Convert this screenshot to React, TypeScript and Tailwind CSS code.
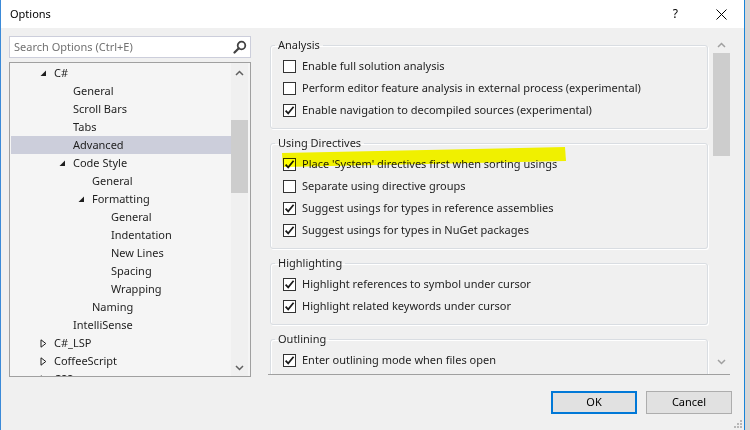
import React from "react";

const FONT = { fontFamily: '"Noto Sans", "Segoe UI", sans-serif' };

type Node = { label: string; level: 0 | 1 | 2 | 3; exp?: "open" | "closed"; sel?: boolean };

const tree: Node[] = [
  { label: "C#", level: 0, exp: "open" },
  { label: "General", level: 1 },
  { label: "Scroll Bars", level: 1 },
  { label: "Tabs", level: 1 },
  { label: "Advanced", level: 1, sel: true },
  { label: "Code Style", level: 1, exp: "open" },
  { label: "General", level: 2 },
  { label: "Formatting", level: 2, exp: "open" },
  { label: "General", level: 3 },
  { label: "Indentation", level: 3 },
  { label: "New Lines", level: 3 },
  { label: "Spacing", level: 3 },
  { label: "Wrapping", level: 3 },
  { label: "Naming", level: 2 },
  { label: "IntelliSense", level: 1 },
  { label: "C#_LSP", level: 0, exp: "closed" },
  { label: "CoffeeScript", level: 0, exp: "closed" },
  { label: "CSS", level: 0, exp: "closed" },
];

const indent: Record<number, string> = {
  0: "pl-[29px]",
  1: "pl-[48px]",
  2: "pl-[67px]",
  3: "pl-[86px]",
};

function Expander({ kind }: { kind?: "open" | "closed" }) {
  return (
    <div className="w-[14px] h-[18px] flex items-center shrink-0">
      {kind === "open" && (
        <svg width="7" height="7" viewBox="0 0 7 7">
          <path d="M6 0.5 L6 6 L0.5 6 Z" fill="#1e1e1e" />
        </svg>
      )}
      {kind === "closed" && (
        <svg width="7" height="9" viewBox="0 0 7 9">
          <path d="M1 0.8 L5.8 4.5 L1 8.2 Z" fill="none" stroke="#1e1e1e" strokeWidth="1" />
        </svg>
      )}
    </div>
  );
}

function Chevron({ up, color = "#606060" }: { up?: boolean; color?: string }) {
  return (
    <svg width="9" height="6" viewBox="0 0 9 6">
      {up ? (
        <path d="M1 5 L4.5 1.5 L8 5" fill="none" stroke={color} strokeWidth="1.5" />
      ) : (
        <path d="M1 1 L4.5 4.5 L8 1" fill="none" stroke={color} strokeWidth="1.5" />
      )}
    </svg>
  );
}

function Check({ checked }: { checked?: boolean }) {
  return (
    <div className="w-[13px] h-[13px] border border-[#333333] bg-white flex items-center justify-center shrink-0">
      {checked && (
        <svg width="11" height="11" viewBox="0 0 11 11">
          <path d="M1.6 5.6 L4.2 8.4 L9.6 1.8" fill="none" stroke="#1a1a1a" strokeWidth="1.7" />
        </svg>
      )}
    </div>
  );
}

function Row({ checked, children }: { checked?: boolean; children: React.ReactNode }) {
  return (
    <div className="h-[22px] flex items-center pl-[12px] gap-[6px] text-[11px] text-[#1e1e1e] whitespace-nowrap">
      <Check checked={checked} />
      <span>{children}</span>
    </div>
  );
}

function Group({
  title,
  children,
  tall,
}: {
  title: string;
  children: React.ReactNode;
  tall?: boolean;
}) {
  return (
    <fieldset
      className={`border border-[#d9dde2] rounded-[3px] shadow-[inset_1px_1px_0_#ffffff,1px_1px_0_#ffffff] pt-[2px] shrink-0 ${
        tall ? "pb-[40px]" : "pb-[7px]"
      }`}
    >
      <legend className="ml-[4px] px-[3px] text-[11px] leading-[16px] text-[#1e1e1e]">{title}</legend>
      {children}
    </fieldset>
  );
}

export default function App() {
  return (
    <div className="w-[750px] h-[430px] flex bg-[#d6d6d6] overflow-hidden" style={FONT}>
      <div className="w-px h-full bg-[#3b8ad8]" />
      <div className="w-[743px] h-full flex flex-col bg-[#f0f0f0]">
        {/* Title bar */}
        <div className="h-[28px] bg-white flex items-center shrink-0">
          <span className="pl-[9px] text-[11px] text-black">Options</span>
          <div className="flex-1" />
          <span className="text-[12px] text-black mr-[38px]">?</span>
          <svg width="11" height="11" viewBox="0 0 11 11" className="mr-[17px]">
            <path d="M0.5 0.5 L10.5 10.5 M10.5 0.5 L0.5 10.5" stroke="#000" strokeWidth="1" />
          </svg>
        </div>

        {/* Main */}
        <div className="h-[349px] flex shrink-0">
          {/* Left column */}
          <div className="w-[250px] pl-[8px] pt-[8px] flex flex-col shrink-0">
            <div className="h-[22px] bg-white border border-[#cccedb] flex items-center pl-[4px] pr-[3px]">
              <span className="flex-1 text-[11px] text-[#717171]">Search Options (Ctrl+E)</span>
              <svg width="14" height="14" viewBox="0 0 14 14">
                <circle cx="8.5" cy="5.5" r="3.8" fill="none" stroke="#424242" strokeWidth="1.8" />
                <path d="M5.8 8.2 L1.5 12.5" stroke="#424242" strokeWidth="2.2" strokeLinecap="round" />
              </svg>
            </div>
            <div className="mt-[4px] h-[315px] border border-[#a0a0a0] bg-[#f5f5f5] flex overflow-hidden">
              <div className="flex-1 pt-[1px] pl-[1px] overflow-hidden">
                {tree.map((n, i) => (
                  <div
                    key={i}
                    className={`h-[18px] flex items-center text-[11px] text-[#1e1e1e] whitespace-nowrap ${indent[n.level]} ${
                      n.sel ? "bg-[#cccedb]" : ""
                    }`}
                  >
                    <Expander kind={n.exp} />
                    <span className="pt-[1px]">{n.label}</span>
                  </div>
                ))}
              </div>
              <div className="w-[17px] mr-[2px] flex flex-col bg-[#f0f0f0]">
                <div className="h-[18px] flex items-center justify-center pt-[2px]">
                  <Chevron up />
                </div>
                <div className="h-[39px]" />
                <div className="h-[73px] bg-[#cdcdcd]" />
                <div className="flex-1" />
                <div className="h-[17px] flex items-center justify-center">
                  <Chevron />
                </div>
              </div>
            </div>
          </div>

          {/* Right column */}
          <div className="ml-[17px] w-[462px] pt-[8px] flex flex-col shrink-0">
            <div className="h-[339px] border-b border-[#a0a0a0] flex overflow-hidden relative">
              <div className="w-[445px] pl-[2px] pr-[5px] pt-[1px] flex flex-col gap-[6px] overflow-hidden">
                <Group title="Analysis">
                  <Row>Enable full solution analysis</Row>
                  <Row>Perform editor feature analysis in external process (experimental)</Row>
                  <Row checked>Enable navigation to decompiled sources (experimental)</Row>
                </Group>
                <Group title="Using Directives">
                  <Row checked>Place 'System' directives first when sorting usings</Row>
                  <Row>Separate using directive groups</Row>
                  <Row checked>Suggest usings for types in reference assemblies</Row>
                  <Row checked>Suggest usings for types in NuGet packages</Row>
                </Group>
                <Group title="Highlighting">
                  <Row checked>Highlight references to symbol under cursor</Row>
                  <Row checked>Highlight related keywords under cursor</Row>
                </Group>
                <Group title="Outlining" tall>
                  <Row checked>Enter outlining mode when files open</Row>
                </Group>
              </div>
              <div className="w-[17px] flex flex-col">
                <div className="h-[17px] flex items-center justify-center">
                  <Chevron up color="#a0a0a0" />
                </div>
                <div className="h-[103px] bg-[#cdcdcd]" />
                <div className="flex-1" />
                <div className="h-[24px] flex items-center justify-center">
                  <Chevron color="#a0a0a0" />
                </div>
              </div>
              {/* marker highlight */}
              <svg
                className="absolute left-0 top-0 mix-blend-multiply pointer-events-none"
                width="320"
                height="200"
              >
                <polygon points="14,117 297,111 298,125 15,131" fill="#ffff00" />
              </svg>
            </div>
          </div>
        </div>

        {/* Footer */}
        <div className="flex-1 flex justify-end items-start pt-[14px] pr-[12px] gap-[9px] relative">
          <button className="w-[86px] h-[23px] border-2 border-[#0078d7] bg-[#e1e1e1] text-[11px] text-black">
            OK
          </button>
          <button className="w-[86px] h-[23px] border border-[#adadad] bg-[#e1e1e1] text-[11px] text-black">
            Cancel
          </button>
          <svg className="absolute right-[2px] bottom-[2px]" width="8" height="8" viewBox="0 0 8 8">
            <rect x="6" y="0" width="2" height="2" fill="#b8b8b8" />
            <rect x="3" y="3" width="2" height="2" fill="#b8b8b8" />
            <rect x="6" y="3" width="2" height="2" fill="#b8b8b8" />
            <rect x="0" y="6" width="2" height="2" fill="#b8b8b8" />
            <rect x="3" y="6" width="2" height="2" fill="#b8b8b8" />
            <rect x="6" y="6" width="2" height="2" fill="#b8b8b8" />
          </svg>
        </div>
      </div>
      <div className="w-px h-full bg-[#1883d7]" />
      <div className="flex-1 h-full bg-[#d6d6d6]" />
    </div>
  );
}
